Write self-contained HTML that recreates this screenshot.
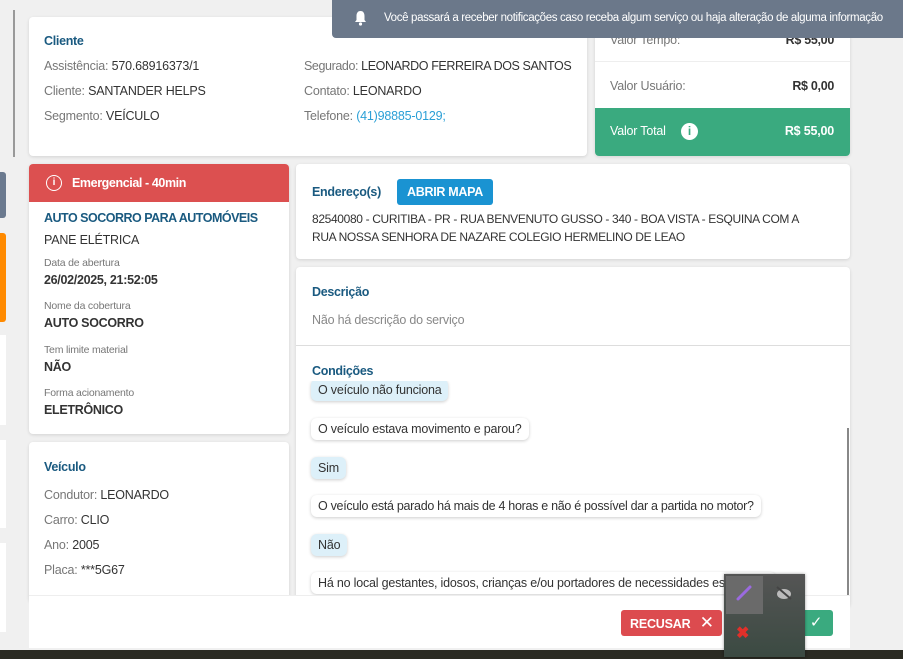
<!DOCTYPE html>
<html><head><meta charset="utf-8"><style>
*{box-sizing:border-box;margin:0;padding:0}
body{width:903px;height:659px;overflow:hidden;background:#f0f0f0;font-family:"Liberation Sans",sans-serif;font-size:12.5px;letter-spacing:-0.2px;color:#333;position:relative}
.a{position:absolute;white-space:nowrap}
.card{position:absolute;background:#fff;border-radius:4px;box-shadow:0 1px 3px rgba(0,0,0,.12)}
.t{color:#1a5a80;font-weight:bold;font-size:12.5px;letter-spacing:-0.3px}
.lbl{color:#777}
.sm{font-size:10.5px;color:#777}
.b{font-weight:bold;color:#333;letter-spacing:-0.3px}
.chip{position:absolute;left:15px;padding:4px 7px;border-radius:6px;background:#fff;box-shadow:0 1px 3px rgba(0,0,0,.2);font-size:12.5px;white-space:nowrap}
.chip.q{background:#ddf0f9}
</style></head><body>
<div class="a" style="left:13px;top:10px;width:2px;height:147px;background:#999"></div>
<div class="a" style="left:0;top:172px;width:6px;height:46px;background:#6b7a8f;border-radius:0 3px 3px 0"></div>
<div class="a" style="left:0;top:233px;width:6px;height:89px;background:#ff8a00;border-radius:0 3px 3px 0"></div>
<div class="a" style="left:0;top:335px;width:6px;height:90px;background:#fff"></div>
<div class="a" style="left:0;top:440px;width:6px;height:88px;background:#fff"></div>
<div class="a" style="left:0;top:543px;width:6px;height:89px;background:#fff"></div>

<div class="card" style="left:29px;top:17px;width:558px;height:139px">
<div class="a t" style="left:15px;top:17px">Cliente</div>
<div class="a" style="left:15px;top:42px"><span class="lbl">Assistência:</span> 570.68916373/1</div>
<div class="a" style="left:15px;top:67px"><span class="lbl">Cliente:</span> SANTANDER HELPS</div>
<div class="a" style="left:15px;top:92px"><span class="lbl">Segmento:</span> VEÍCULO</div>
<div class="a" style="left:275px;top:42px;letter-spacing:-0.4px"><span class="lbl">Segurado:</span> LEONARDO FERREIRA DOS SANTOS</div>
<div class="a" style="left:275px;top:67px"><span class="lbl">Contato:</span> LEONARDO</div>
<div class="a" style="left:275px;top:92px"><span class="lbl">Telefone:</span> <span style="color:#2a9fd6">(41)98885-0129;</span></div>
</div>

<div class="card" style="left:595px;top:0;width:255px;height:156px;overflow:hidden">
<div class="a" style="left:15px;top:33px;color:#777">Valor Tempo:</div><div class="a b" style="right:16px;top:33px">R$ 55,00</div>
<div class="a" style="left:0;top:61px;width:255px;height:1px;background:#eee"></div>
<div class="a" style="left:15px;top:79px;color:#777">Valor Usuário:</div><div class="a b" style="right:16px;top:79px">R$ 0,00</div>
<div class="a" style="left:0;top:108px;width:255px;height:48px;background:#3aaa7f;color:#fff">
<div class="a" style="left:15px;top:16px">Valor Total</div>
<div class="a" style="left:86px;top:15px;width:17px;height:17px;border-radius:50%;background:#fff;color:#3aaa7f;font-weight:bold;font-size:12px;text-align:center;line-height:17px">i</div>
<div class="a" style="right:16px;top:16px;font-weight:bold">R$ 55,00</div></div>
</div>

<div class="a" style="left:332px;top:0;width:571px;height:38px;background:#6b788a;border-radius:0 0 0 4px;color:#fff;font-size:11.5px;letter-spacing:-0.35px;overflow:hidden">
<svg class="a" style="left:21px;top:10px" width="15" height="16" viewBox="0 0 15 16"><path d="M7.5 1C4.5 1 3.5 3.5 3.5 6v4L2 12h11l-1.5-2V6c0-2.5-1-5-4-5z" fill="#fff"/><circle cx="7.5" cy="14" r="1.6" fill="#fff"/></svg>
<div class="a" style="left:52px;top:12px">Você passará a receber notificações caso receba algum serviço ou haja alteração de alguma informação</div></div>

<div class="card" style="left:29px;top:164px;width:260px;height:270px;overflow:hidden">
<div class="a" style="left:0;top:0;width:260px;height:38px;background:#dc5050;color:#fff;font-weight:bold;letter-spacing:-0.4px">
<div class="a" style="left:17px;top:11px;width:16px;height:16px;border:1.5px solid #fff;border-radius:50%;font-size:10px;text-align:center;line-height:13px;letter-spacing:0">i</div>
<div class="a" style="left:43px;top:12px">Emergencial - 40min</div></div>
<div class="a t" style="left:15px;top:47px;letter-spacing:-0.5px">AUTO SOCORRO PARA AUTOMÓVEIS</div>
<div class="a" style="left:15px;top:69px">PANE ELÉTRICA</div>
<div class="a sm" style="left:15px;top:93px">Data de abertura</div><div class="a b" style="left:15px;top:109px">26/02/2025, 21:52:05</div>
<div class="a sm" style="left:15px;top:136px">Nome da cobertura</div><div class="a b" style="left:15px;top:152px">AUTO SOCORRO</div>
<div class="a sm" style="left:15px;top:180px">Tem limite material</div><div class="a b" style="left:15px;top:196px">NÃO</div>
<div class="a sm" style="left:15px;top:223px">Forma acionamento</div><div class="a b" style="left:15px;top:239px">ELETRÔNICO</div>
</div>

<div class="card" style="left:29px;top:442px;width:260px;height:160px">
<div class="a t" style="left:15px;top:18px">Veículo</div>
<div class="a" style="left:15px;top:46px"><span class="lbl">Condutor:</span> LEONARDO</div>
<div class="a" style="left:15px;top:71px"><span class="lbl">Carro:</span> CLIO</div>
<div class="a" style="left:15px;top:96px"><span class="lbl">Ano:</span> 2005</div>
<div class="a" style="left:15px;top:121px"><span class="lbl">Placa:</span> ***5G67</div>
</div>

<div class="card" style="left:296px;top:164px;width:554px;height:95px">
<div class="a t" style="left:16px;top:21px">Endereço(s)</div>
<div class="a" style="left:101px;top:15px;width:96px;height:26px;background:#1a93d2;border-radius:3px;color:#fff;font-weight:bold;text-align:center;line-height:26px;letter-spacing:-0.3px">ABRIR MAPA</div>
<div class="a" style="left:16px;top:46px;line-height:18px;font-size:12px;letter-spacing:-0.35px">82540080 - CURITIBA - PR - RUA BENVENUTO GUSSO - 340 - BOA VISTA - ESQUINA COM A<br>RUA NOSSA SENHORA DE NAZARE COLEGIO HERMELINO DE LEAO</div>
</div>

<div class="card" style="left:296px;top:267px;width:554px;height:340px;overflow:hidden">
<div class="a t" style="left:16px;top:18px">Descrição</div>
<div class="a" style="left:16px;top:46px;color:#888">Não há descrição do serviço</div>
<div class="a" style="left:0;top:78px;width:554px;height:1px;background:#ddd"></div>
<div class="a t" style="left:16px;top:97px">Condições</div>
<div class="a" style="left:0;top:114px;width:554px;height:230px;overflow:hidden">
<div class="chip q" style="top:-2px">O veículo não funciona</div>
<div class="chip" style="top:37px">O veículo estava movimento e parou?</div>
<div class="chip q" style="top:76px">Sim</div>
<div class="chip" style="top:114px;letter-spacing:-0.3px">O veículo está parado há mais de 4 horas e não é possível dar a partida no motor?</div>
<div class="chip q" style="top:153px">Não</div>
<div class="chip" style="top:191px">Há no local gestantes, idosos, crianças e/ou portadores de necessidades especiais?</div>
</div>
<div class="a" style="left:551px;top:161px;width:2px;height:170px;background:#888"></div>
</div>

<div class="a" style="left:29px;top:595px;width:821px;height:53px;background:#fff;border-top:1px solid #eee">
<div class="a" style="left:592px;top:14px;width:101px;height:26px;background:#dc4b4f;border-radius:3px;color:#fff;font-weight:bold;line-height:26px;padding-left:9px">RECUSAR <span style="font-weight:normal;font-size:17px;margin-left:6px">✕</span></div>
<div class="a" style="left:770px;top:14px;width:34px;height:26px;background:#3aaa7f;border-radius:3px;color:#fff;text-align:center;line-height:26px;font-size:15px">✓</div>
</div>
<div class="a" style="left:0;top:650px;width:903px;height:9px;background:#2a2a22"></div>

<div class="a" style="left:724px;top:574px;width:81px;height:83px;background:linear-gradient(#555,#3b4a42);box-shadow:0 0 3px rgba(0,0,0,.4)">
<div class="a" style="left:2px;top:2px;width:37px;height:38px;background:#6a6a6a"></div>
<svg class="a" style="left:12px;top:11px" width="16" height="16"><path d="M2 14L14 2" stroke="#9b6ae0" stroke-width="3" stroke-linecap="round"/></svg>
<svg class="a" style="left:51px;top:12px" width="18" height="14"><ellipse cx="9" cy="8" rx="7" ry="5" fill="#bbb"/><path d="M2 1L16 13" stroke="#444" stroke-width="2"/></svg>
<div class="a" style="left:12px;top:49px;color:#e0302a;font-size:16px;font-weight:bold">✖</div>
</div>
</body></html>
